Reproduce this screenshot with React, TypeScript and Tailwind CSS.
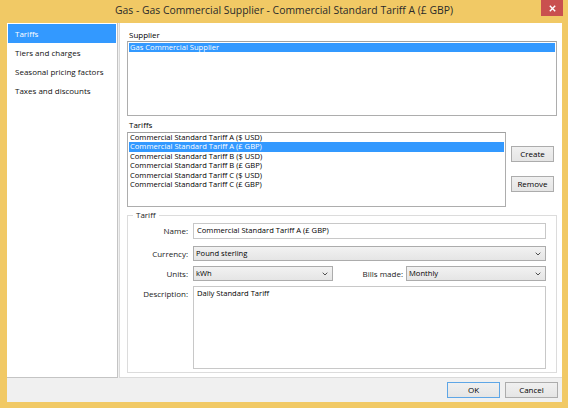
import React from "react";

const tariffs = [
  "Commercial Standard Tariff A ($ USD)",
  "Commercial Standard Tariff A (£ GBP)",
  "Commercial Standard Tariff B ($ USD)",
  "Commercial Standard Tariff B (£ GBP)",
  "Commercial Standard Tariff C ($ USD)",
  "Commercial Standard Tariff C (£ GBP)",
];

const navItems = ["Tariffs", "Tiers and charges", "Seasonal pricing factors", "Taxes and discounts"];

function Chevron() {
  return (
    <svg width="6" height="4" viewBox="0 0 6 4" className="shrink-0">
      <path d="M0.7 0.7 L3 3 L5.3 0.7" fill="none" stroke="#505050" strokeWidth="1" />
    </svg>
  );
}

function Combo({ value, className }: { value: string; className: string }) {
  return (
    <div
      className={
        "h-[15px] flex items-center justify-between pl-[2px] pr-[4px] border border-[#acacac] bg-gradient-to-b from-[#f2f2f2] to-[#e5e5e5] text-[7.6px] " +
        className
      }
    >
      <span>{value}</span>
      <Chevron />
    </div>
  );
}

export default function App() {
  return (
    <div className="w-[568px] h-[408px] bg-[#f1c965] flex flex-col overflow-hidden relative font-['Open_Sans',sans-serif] text-[8px] text-black">
      <div className="h-[23px] shrink-0 flex items-center justify-center text-[10.4px] text-[#2a2a2a] pb-[1px]">
        Gas - Gas Commercial Supplier - Commercial Standard Tariff A (£ GBP)
      </div>
      <div className="absolute top-0 right-[5px] w-[22px] h-[16px] bg-[#c9504f] flex items-center justify-center">
        <svg width="7" height="7" viewBox="0 0 7 7">
          <path d="M0.8 0.8 L6.2 6.2 M6.2 0.8 L0.8 6.2" stroke="#ffffff" strokeWidth="1.4" />
        </svg>
      </div>

      <div className="flex-1 ml-[7px] mr-[6px] mb-[6px] bg-[#f0f0f0] flex flex-col">
        <div className="h-[355px] shrink-0 flex">
          {/* Nav */}
          <div className="w-[111px] bg-white border-r border-b border-[#c4c4c4] pt-[1px] px-[1px] flex flex-col">
            {navItems.map((n, i) => (
              <div
                key={n}
                className={
                  "h-[19px] flex items-center pl-[7px] pt-[1px] text-[8px] " +
                  (i === 0 ? "bg-[#3399ff] text-white" : "text-[#111]")
                }
              >
                {n}
              </div>
            ))}
          </div>

          {/* Main */}
          <div className="flex-1 ml-[1px] bg-white border-l border-b border-[#dadada] flex flex-col pl-[7px] pr-[5px] pt-[7px]">
            <div className="h-[10px] leading-[10px] pl-[2px]">Supplier</div>
            <div className="mt-[1px] h-[75px] border border-[#adadad] border-t-[#a0a0a0] bg-white p-[1px] text-[7.6px]">
              <div className="h-[9.4px] leading-[9.4px] bg-[#3399ff] text-white pl-[1px]">Gas Commercial Supplier</div>
            </div>

            <div className="mt-[4px] h-[10px] leading-[10px] pl-[2px]">Tariffs</div>
            <div className="mt-[2px] flex">
              <div className="w-[379px] h-[75px] border border-[#adadad] border-t-[#a0a0a0] bg-white px-[1px] text-[7.6px]">
                {tariffs.map((t, i) => (
                  <div
                    key={t}
                    className={
                      "h-[9.4px] leading-[9.4px] pl-[1px] " + (i === 1 ? "bg-[#3399ff] text-white" : "")
                    }
                  >
                    {t}
                  </div>
                ))}
              </div>
              <div className="ml-[5px] flex flex-col pt-[14px] gap-[14px]">
                <button className="w-[43px] h-[16px] border border-[#acacac] bg-gradient-to-b from-[#f0f0f0] to-[#e5e5e5] text-[8px] leading-none">
                  Create
                </button>
                <button className="w-[43px] h-[16px] border border-[#acacac] bg-gradient-to-b from-[#f0f0f0] to-[#e5e5e5] text-[8px] leading-none">
                  Remove
                </button>
              </div>
            </div>

            {/* Group box */}
            <div className="mt-[8px] h-[158px] relative border border-[#dcdcdc] pt-[7px] pr-[10px] pb-[3px] flex flex-col">
              <span className="absolute -top-[6px] left-[5px] bg-white px-[3px] leading-[10px] text-[#222]">Tariff</span>

              <div className="flex items-center h-[16px]">
                <div className="w-[62px] text-right pr-[2px] text-[#222]">Name:</div>
                <div className="ml-[3px] flex-1 h-[16px] border border-[#c8c8c8] bg-white flex items-center pl-[3px] text-[7.6px]">
                  Commercial Standard Tariff A (£ GBP)
                </div>
              </div>

              <div className="flex items-center mt-[7px]">
                <div className="w-[62px] text-right pr-[2px] text-[#222]">Currency:</div>
                <Combo value="Pound sterling" className="ml-[3px] flex-1" />
              </div>

              <div className="flex items-center mt-[5px]">
                <div className="w-[62px] text-right pr-[2px] text-[#222]">Units:</div>
                <Combo value="kWh" className="ml-[3px] w-[140px]" />
                <div className="flex-1 text-right pr-[3px] text-[#222]">Bills made:</div>
                <Combo value="Monthly" className="w-[140px]" />
              </div>

              <div className="flex items-start mt-[5px] flex-1">
                <div className="w-[62px] text-right pr-[2px] pt-[2px] text-[#222]">Description:</div>
                <div className="ml-[3px] flex-1 h-full border border-[#c8c8c8] bg-white pl-[3px] pt-[1px] text-[7.6px]">
                  Daily Standard Tariff
                </div>
              </div>
            </div>
          </div>
        </div>

        {/* Bottom buttons */}
        <div className="flex-1 flex items-center justify-end pr-[4px] gap-[5px]">
          <button className="w-[53px] h-[16px] border border-[#5ea6e6] bg-gradient-to-b from-[#f0f0f0] to-[#e5e5e5] text-[8px] leading-none">
            OK
          </button>
          <button className="w-[53px] h-[16px] border border-[#acacac] bg-gradient-to-b from-[#f0f0f0] to-[#e5e5e5] text-[8px] leading-none">
            Cancel
          </button>
        </div>
      </div>
    </div>
  );
}
